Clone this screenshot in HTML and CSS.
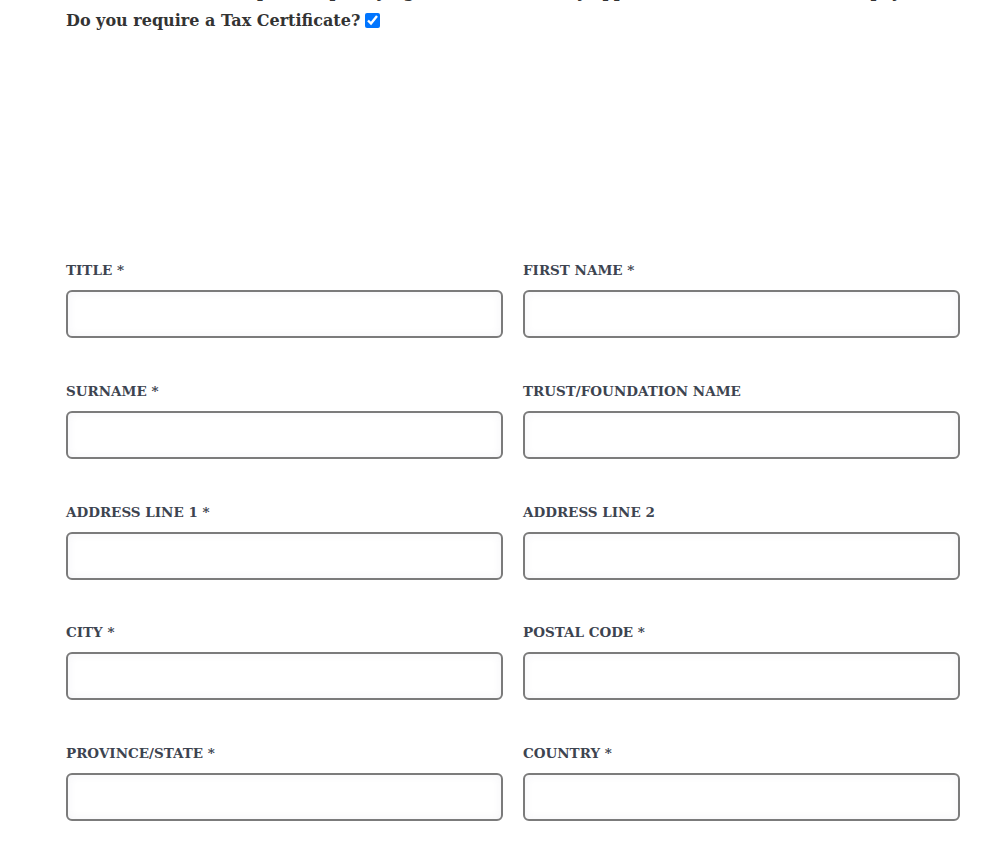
FILE: index.html
```html
<!DOCTYPE html>
<html lang="en">
<head>
<meta charset="utf-8">
<title>Tax Certificate</title>
<link rel="stylesheet" href="styles.css">
</head>
<body>
<div class="page">
  <p class="intro">Tax deductions in respect of qualifying donations are only applicable to South African taxpayers.</p>
  <p class="question"><span>Do you require a Tax Certificate?</span> <input type="checkbox" class="check" checked></p>
  <form class="form-grid">
    <div class="field"><label class="lbl">TITLE *</label><input class="inp" type="text"></div>
    <div class="field"><label class="lbl">FIRST NAME *</label><input class="inp" type="text"></div>
    <div class="field"><label class="lbl">SURNAME *</label><input class="inp" type="text"></div>
    <div class="field"><label class="lbl">TRUST/FOUNDATION NAME</label><input class="inp" type="text"></div>
    <div class="field"><label class="lbl">ADDRESS LINE 1 *</label><input class="inp" type="text"></div>
    <div class="field"><label class="lbl">ADDRESS LINE 2</label><input class="inp" type="text"></div>
    <div class="field"><label class="lbl">CITY *</label><input class="inp" type="text"></div>
    <div class="field"><label class="lbl">POSTAL CODE *</label><input class="inp" type="text"></div>
    <div class="field"><label class="lbl">PROVINCE/STATE *</label><input class="inp" type="text"></div>
    <div class="field"><label class="lbl">COUNTRY *</label><input class="inp" type="text"></div>
  </form>
</div>
</body>
</html>
```
FILE: styles.css
```css
html, body {
  margin: 0;
  padding: 0;
  background: #ffffff;
}
body {
  font-family: "DejaVu Serif", "Liberation Serif", serif;
  color: #333333;
  overflow: hidden;
}
.page {
  width: 894px;
  margin-left: 66px;
}
.intro {
  margin: -19px 0 0 0;
  font-size: 16px;
  font-weight: bold;
  line-height: 22px;
  white-space: nowrap;
  overflow: hidden;
}
.question {
  margin: 5px 0 0 0;
  font-size: 16px;
  font-weight: bold;
  line-height: 26px;
  height: 26px;
  display: flex;
  align-items: center;
  gap: 5px;
}
.check {
  margin: 0 0 2px 0;
  width: 15px;
  height: 15px;
}
.form-grid {
  margin-top: 226px;
  display: grid;
  grid-template-columns: 437px 437px;
  column-gap: 20px;
  row-gap: 42.75px;
}
.field {
  display: flex;
  flex-direction: column;
}
.lbl {
  font-size: 13.5px;
  font-weight: bold;
  line-height: 20px;
  color: #3d4450;
  margin-bottom: 10px;
  white-space: nowrap;
}
.inp {
  box-sizing: border-box;
  width: 100%;
  height: 48px;
  margin: 0;
  border: 2px solid #7b7b7b;
  border-radius: 6px;
  background: #ffffff;
  box-shadow: inset 0 0 10px rgba(60, 60, 120, 0.06);
  outline: none;
}
```
